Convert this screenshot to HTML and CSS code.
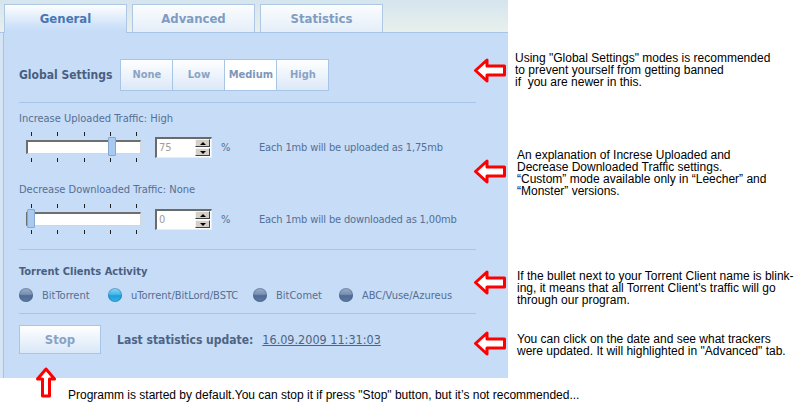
FILE: index.html
```html
<!DOCTYPE html>
<html lang="en">
<head>
  <meta charset="UTF-8">
  <title>General settings</title>
  <link rel="stylesheet" href="styles.css">
</head>
<body>
  <div class="sheet">
    <!-- Tabs -->
    <nav class="tabbar">
      <a class="tab active">General</a>
      <a class="tab">Advanced</a>
      <a class="tab">Statistics</a>
    </nav>
    <div class="blank"></div>

    <!-- Global settings -->
    <section class="sec sec-global">
      <div class="inner">
        <h2 class="title">Global Settings</h2>
        <div class="modes">
          <button>None</button>
          <button>Low</button>
          <button class="on">Medium</button>
          <button>High</button>
        </div>
      </div>
      <svg class="arrow" viewBox="0 0 34 25"><path d="M2.5 12.5 L14 2 V8 H31.5 V17 H14 V23 Z"/></svg>
    </section>
    <p class="note note-global">Using "Global Settings" modes is recommended<br>to prevent yourself from getting banned<br>if&nbsp; you are newer in this.</p>

    <!-- Traffic -->
    <section class="sec sec-traffic">
      <div class="inner">
        <div class="label">Increase Uploaded Traffic: High</div>
        <div class="traffic-row">
          <div class="slider">
            <div class="ticks"><i></i><i></i><i></i><i></i><i></i></div>
            <div class="track"><span class="thumb thumb-high"></span></div>
            <div class="ticks"><i></i><i></i><i></i><i></i><i></i></div>
          </div>
          <div class="spin"><span class="spin-val">75</span><span class="spin-btns"><b class="up"></b><b class="down"></b></span></div>
          <span class="pct">%</span>
          <span class="expl">Each 1mb will be uploaded as 1,75mb</span>
        </div>
        <div class="label label-2">Decrease Downloaded Traffic: None</div>
        <div class="traffic-row">
          <div class="slider">
            <div class="ticks"><i></i><i></i><i></i><i></i><i></i></div>
            <div class="track"><span class="thumb"></span></div>
            <div class="ticks"><i></i><i></i><i></i><i></i><i></i></div>
          </div>
          <div class="spin"><span class="spin-val">0</span><span class="spin-btns"><b class="up"></b><b class="down"></b></span></div>
          <span class="pct">%</span>
          <span class="expl">Each 1mb will be downloaded as 1,00mb</span>
        </div>
      </div>
      <svg class="arrow" viewBox="0 0 34 25"><path d="M2.5 12.5 L14 2 V8 H31.5 V17 H14 V23 Z"/></svg>
    </section>
    <p class="note note-traffic">An explanation of Increse Uploaded and<br>Decrease Downloaded Traffic settings.<br>“Custom” mode available only in “Leecher” and<br>“Monster” versions.</p>

    <!-- Clients -->
    <section class="sec sec-clients">
      <div class="inner">
        <h3 class="title title-sm">Torrent Clients Activity</h3>
        <ul class="clients">
          <li><span class="bullet"></span>BitTorrent</li>
          <li><span class="bullet live"></span>uTorrent/BitLord/BSTC</li>
          <li><span class="bullet"></span>BitComet</li>
          <li><span class="bullet"></span>ABC/Vuse/Azureus</li>
        </ul>
      </div>
      <svg class="arrow" viewBox="0 0 34 25"><path d="M2.5 12.5 L14 2 V8 H31.5 V17 H14 V23 Z"/></svg>
    </section>
    <p class="note note-clients">If the bullet next to your Torrent Client name is blink-<br>ing, it means that all Torrent Client's traffic will go<br>through our program.</p>

    <!-- Stop / last update -->
    <section class="sec sec-stop">
      <div class="inner">
        <button class="stop">Stop</button>
        <span class="last">Last statistics update:</span>
        <a class="date" href="#">16.09.2009 11:31:03</a>
      </div>
      <svg class="arrow" viewBox="0 0 34 25"><path d="M2.5 12.5 L14 2 V8 H31.5 V17 H14 V23 Z"/></svg>
    </section>
    <p class="note note-stop">You can click on the date and see what trackers<br>were updated. It will highlighted in "Advanced" tab.</p>

    <!-- Footer note -->
    <div class="footer">
      <svg class="arrow-up" viewBox="0 0 20 31"><path d="M10 2 L18.5 12 H13.5 V29 H6.5 V12 H1.5 Z"/></svg>
      <p class="note">Programm is started by default.You can stop it if press "Stop" button, but it’s not recommended...</p>
    </div>
  </div>
</body>
</html>
```

FILE: styles.css
```css
/* Reset */
* {
  margin: 0;
  padding: 0;
  box-sizing: border-box;
}

body {
  width: 800px;
  height: 420px;
  overflow: hidden;
  background: #ffffff;
  color: #566f93;
  font-family: "DejaVu Sans Condensed", "DejaVu Sans", sans-serif;
  font-size: 11px;
}

/* Page grid: panel on the left, notes on the right */
.sheet {
  display: grid;
  grid-template-columns: 508px 292px;
  grid-template-rows: 33px 70px 147px 64px 64px 43px;
}

/* Tabs */
.tabbar {
  display: flex;
  gap: 5px;
  padding: 4px 0 0 4px;
  background: linear-gradient(#d5e5ee, #e8f0ec);
  border-bottom: 1px solid #a9c5e6;
}

.tab {
  width: 123px;
  height: 28px;
  border: 1px solid #adc7e4;
  border-bottom: 0;
  background: linear-gradient(#fbfdfe, #e4eef9);
  display: flex;
  align-items: center;
  justify-content: center;
  padding-bottom: 1px;
  font-size: 13px;
  font-weight: bold;
  color: #7f9cc2;
}

.tab.active {
  height: 29px;
  margin-bottom: -1px;
  background: linear-gradient(#fdfeff, #c6dcf7 90%);
  color: #4677b5;
}

/* Panel sections */
.sec {
  position: relative;
  background: #c6dcf7;
  border-left: 3px solid #d6e5f6;
  box-shadow: inset 1px 0 #a6c2e3;
}

.inner {
  height: 100%;
  margin: 0 32px 0 16px;
  border-bottom: 1px solid #a8c5e8;
}

.sec-stop .inner {
  border-bottom: 0;
}

.title {
  font-size: 12px;
  font-weight: bold;
  color: #4a5f7f;
}

.title-sm {
  font-size: 11px;
  line-height: 13px;
}

/* Callout arrows */
.arrow {
  position: absolute;
  right: 1px;
  width: 34px;
  height: 25px;
}

.arrow path,
.arrow-up path {
  fill: #ffffff;
  stroke: #ff0000;
  stroke-width: 3;
  stroke-linejoin: round;
}

.sec-global .arrow { top: 25px; }
.sec-traffic .arrow { top: 56px; }
.sec-clients .arrow { top: 20px; }
.sec-stop .arrow { top: 17px; }

/* Global settings */
.sec-global .inner {
  display: flex;
  align-items: center;
  gap: 8px;
  padding-bottom: 11px;
  padding-top: 25px;
}

.modes {
  display: flex;
  border: 1px solid #a9c5e6;
}

.modes button {
  width: 52px;
  height: 30px;
  border: 0;
  border-left: 1px solid #a9c5e6;
  background: linear-gradient(#ffffff, #dbe8f8);
  font-family: inherit;
  font-size: 11px;
  font-weight: bold;
  color: #8aa3c5;
}

.modes button:first-child {
  width: 51px;
  border-left: 0;
}

.modes button.on {
  background: #ffffff;
  color: #7d97bb;
}

/* Traffic sliders */
.sec-traffic .inner {
  padding-top: 9px;
}

.label {
  line-height: 13px;
}

.label-2 {
  margin-top: 21px;
}

.traffic-row {
  display: flex;
  align-items: center;
  height: 30px;
  margin-top: 7px;
}

.label-2 + .traffic-row {
  margin-top: 8px;
}

.slider {
  width: 115px;
  margin-left: 7px;
  display: flex;
  flex-direction: column;
  gap: 4px;
}

.ticks {
  display: flex;
  justify-content: space-between;
  padding: 0 4px 0 5px;
  height: 4px;
}

.ticks i {
  width: 1px;
  height: 4px;
  background: #202020;
}

.track {
  position: relative;
  height: 14px;
  background: #ffffff;
  border-style: solid;
  border-width: 2px 1px 1px 2px;
  border-color: #6e6e6e #d6d6d6 #d6d6d6 #6e6e6e;
}

.thumb {
  position: absolute;
  top: -5px;
  left: -1px;
  width: 8px;
  height: 19px;
  background: #a8c9f0;
  border: 1px solid #86a7d0;
  border-radius: 1px;
}

.thumb-high {
  left: 80px;
}

.spin {
  display: flex;
  align-items: center;
  justify-content: space-between;
  width: 57px;
  height: 21px;
  margin-left: 14px;
  background: #ffffff;
  border-style: solid;
  border-width: 2px 1px 1px 2px;
  border-color: #6a6a6a #ececec #ececec #6a6a6a;
  padding: 0 1px 0 2px;
}

.spin-val {
  color: #9c9c9c;
  font-size: 11px;
}

.spin-btns {
  display: flex;
  flex-direction: column;
  gap: 1px;
}

.spin-btns b {
  width: 15px;
  height: 8px;
  background: #d4d0c8;
  border: 1px solid;
  border-color: #f4f4f4 #404040 #404040 #f4f4f4;
  display: flex;
  align-items: center;
  justify-content: center;
}

.spin-btns b::after {
  content: "";
  border-left: 3px solid transparent;
  border-right: 3px solid transparent;
}

.spin-btns .up::after {
  border-bottom: 3px solid #000000;
}

.spin-btns .down::after {
  border-top: 3px solid #000000;
}

.pct {
  margin-left: 9px;
  width: 10px;
}

.expl {
  margin-left: 28px;
  letter-spacing: -0.15px;
}

/* Torrent clients */
.sec-clients .inner {
  padding-top: 15px;
}

.clients {
  list-style: none;
  display: grid;
  grid-template-columns: 89px 145px 86px auto;
  margin-top: 10px;
}

.clients li {
  display: flex;
  align-items: center;
  gap: 9px;
  height: 14px;
}

.bullet {
  width: 14px;
  height: 14px;
  border-radius: 50%;
  background: linear-gradient(#9bb0cb 0%, #7890b2 45%, #4d6b95 55%, #5f7ca4 100%);
  box-shadow: inset 0 0 0 1px rgba(60, 85, 120, 0.35);
}

.bullet.live {
  background: linear-gradient(#8fd6f7 0%, #45b8ec 45%, #1c9edc 55%, #39b3ea 100%);
}

/* Stop row */
.sec-stop .inner {
  display: flex;
  align-items: center;
  padding-bottom: 14px;
  padding-top: 1px;
}

.stop {
  width: 82px;
  height: 29px;
  border: 1px solid #a9c5e6;
  background: linear-gradient(#ffffff, #d9e7f8);
  font-family: inherit;
  font-size: 13px;
  font-weight: bold;
  color: #8aa3c5;
}

.last {
  margin-left: 16px;
  font-size: 12px;
  font-weight: bold;
  color: #4e6484;
}

.date {
  margin-left: 9px;
  font-size: 12.5px;
  color: #4e6484;
}

/* Notes */
.note {
  font-family: "Liberation Sans", Arial, sans-serif;
  font-size: 12px;
  line-height: 12px;
  color: #000000;
  padding-left: 9px;
}

.note-global { padding-top: 19px; padding-left: 7px; }
.note-traffic { padding-top: 46px; }
.note-clients { padding-top: 20px; }
.note-stop { padding-top: 19px; }

.footer {
  grid-column: 1 / -1;
  display: flex;
  align-items: flex-start;
  padding-left: 36px;
}

.arrow-up {
  position: relative;
  z-index: 1;
  width: 20px;
  height: 31px;
  margin-top: -11px;
}

.footer .note {
  padding-left: 12px;
  padding-top: 11px;
}
```
